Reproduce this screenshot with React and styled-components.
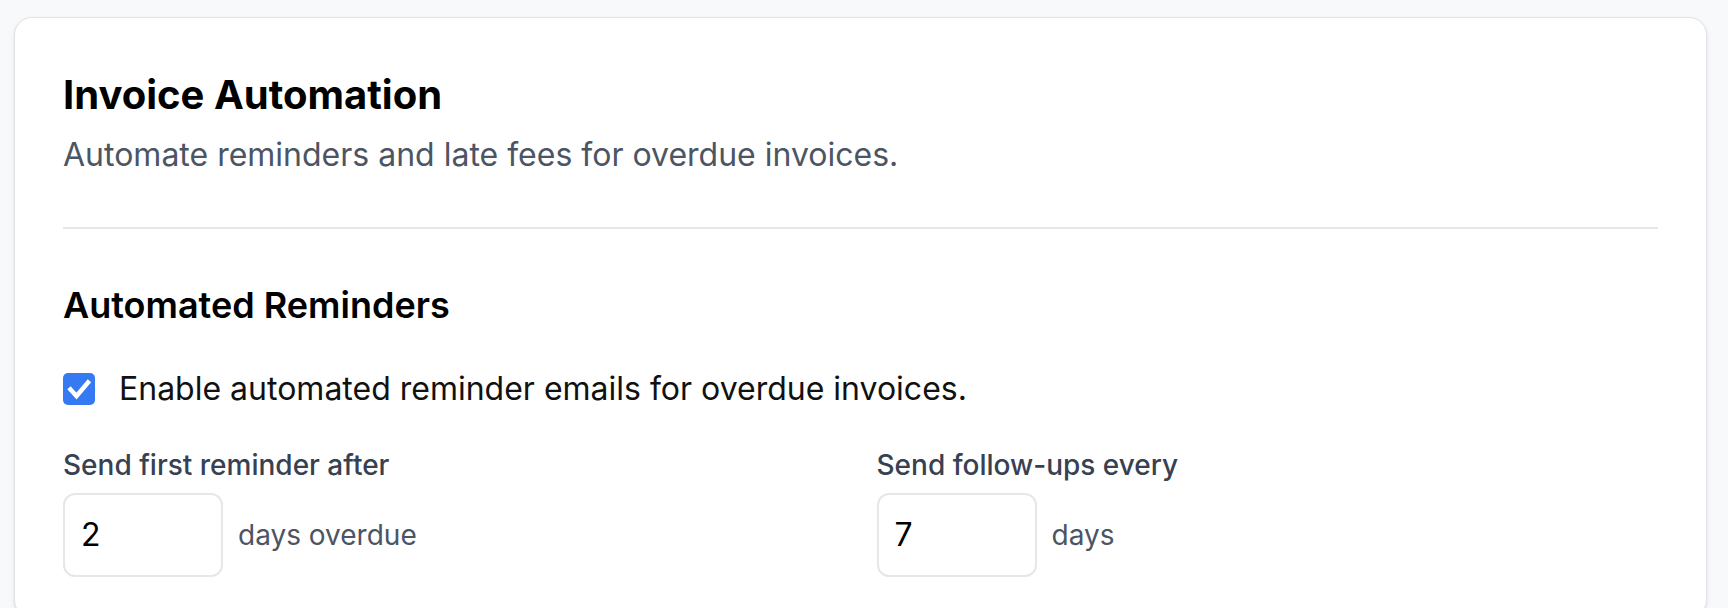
import React, { useState } from 'react';
import styled, { createGlobalStyle } from 'styled-components';

const GlobalStyle = createGlobalStyle`
  html, body {
    margin: 0;
    padding: 0;
    background: #f8f9fb;
    font-family: Inter, "Noto Sans", "Liberation Sans", sans-serif;
  }
`;

// fond de page, la carte est un peu décalée vers la gauche
const Page = styled.div`
  min-height: 608px;
  box-sizing: border-box;
  padding: 17px 21px 0 14px;
`;

const Card = styled.section`
  background: #fff;
  border: 1px solid #e2e3e8;
  border-radius: 18px;
  box-shadow: 0 1px 2px rgba(17, 24, 39, 0.08), 0 2px 6px rgba(17, 24, 39, 0.05);
  padding: 49px 48px 40px;
`;

const Header = styled.header`
  padding-bottom: 48px;
  border-bottom: 2px solid #e5e7eb;
`;

const Title = styled.h1`
  margin: 0;
  font-size: 40px;
  line-height: 56px;
  font-weight: 700;
  color: #000;
`;

const Subtitle = styled.p`
  margin: 8px 0 0;
  font-size: 32px;
  line-height: 48px;
  color: #4b5563;
`;

const Section = styled.div`
  padding-top: 48px;
`;

const SectionTitle = styled.h2`
  margin: 0;
  font-size: 36px;
  line-height: 56px;
  font-weight: 600;
  color: #000;
`;

const CheckRow = styled.label`
  display: flex;
  align-items: center;
  gap: 24px;
  margin-top: 32px;
  font-size: 32px;
  line-height: 48px;
  color: #111;
  cursor: pointer;
`;

const Box = styled.span`
  flex: none;
  width: 32px;
  height: 32px;
  border-radius: 5px;
  box-sizing: border-box;
  display: flex;
  align-items: center;
  justify-content: center;
  background: ${({ checked }) => (checked ? '#3579f3' : '#fff')};
  border: ${({ checked }) => (checked ? 'none' : '2px solid #9ca3af')};
`;

const Fields = styled.div`
  display: grid;
  grid-template-columns: 1fr 1fr;
  gap: 32px;
  margin-top: 32px;
`;

const Field = styled.div`
  display: flex;
  flex-direction: column;
  gap: 8px;
`;

const FieldLabel = styled.span`
  font-size: 28px;
  line-height: 40px;
  font-weight: 500;
  color: #374151;
`;

const InputRow = styled.div`
  display: flex;
  align-items: center;
  gap: 15px;
`;

const NumberInput = styled.input`
  width: 160px;
  box-sizing: border-box;
  padding: 16px;
  border: 2px solid #e5e7eb;
  border-radius: 12px;
  font-family: inherit;
  font-size: 32px;
  line-height: 48px;
  color: #000;
  outline: none;
`;

const Unit = styled.span`
  font-size: 28px;
  line-height: 40px;
  color: #4b5563;
`;

const Check = () => (
  <svg width="32" height="32" viewBox="0 0 32 32">
    <path d="M7.5 16.5 L13.5 23 L25 9.5" fill="none" stroke="#fff" strokeWidth="4.5" strokeLinecap="square" />
  </svg>
);

export default function App() {
  const [enabled, setEnabled] = useState(true);
  const [first, setFirst] = useState('2');
  const [every, setEvery] = useState('7');

  return (
    <Page>
      <GlobalStyle />
      <Card>
        <Header>
          <Title>Invoice Automation</Title>
          <Subtitle>Automate reminders and late fees for overdue invoices.</Subtitle>
        </Header>
        <Section>
          <SectionTitle>Automated Reminders</SectionTitle>
          <CheckRow onClick={() => setEnabled(!enabled)}>
            <Box checked={enabled}>{enabled && <Check />}</Box>
            Enable automated reminder emails for overdue invoices.
          </CheckRow>
          <Fields>
            <Field>
              <FieldLabel>Send first reminder after</FieldLabel>
              <InputRow>
                <NumberInput value={first} onChange={e => setFirst(e.target.value)} />
                <Unit>days overdue</Unit>
              </InputRow>
            </Field>
            <Field>
              <FieldLabel>Send follow-ups every</FieldLabel>
              <InputRow>
                <NumberInput value={every} onChange={e => setEvery(e.target.value)} />
                <Unit>days</Unit>
              </InputRow>
            </Field>
          </Fields>
        </Section>
      </Card>
    </Page>
  );
}
